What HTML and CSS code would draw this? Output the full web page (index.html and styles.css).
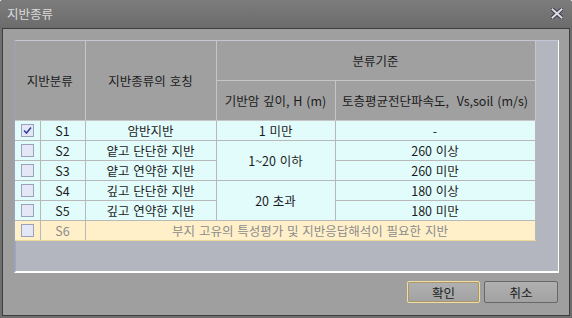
FILE: index.html
```html
<!DOCTYPE html>
<html><head><meta charset="UTF-8">
<title>지반종류</title>
<link rel="stylesheet" href="styles.css">
</head>
<body>
<div class="window">
  <div class="titlebar">
    <span class="title">지반종류</span>
    <svg class="close" width="12" height="11" viewBox="0 0 12 11">
      <path d="M1.5 1.5 L10.5 9.5 M10.5 1.5 L1.5 9.5" stroke="#3c3c4c" stroke-width="4" stroke-linecap="square"/>
      <path d="M1.5 1.5 L10.5 9.5 M10.5 1.5 L1.5 9.5" stroke="#dcdce4" stroke-width="2" stroke-linecap="square"/>
    </svg>
  </div>
  <div class="body">
    <div class="grid">
      <table class="sites">
        <colgroup>
          <col class="c-chk"><col class="c-code"><col class="c-name"><col class="c-depth"><col class="c-vs">
        </colgroup>
        <thead>
          <tr class="h1">
            <th colspan="2" rowspan="2">지반분류</th>
            <th rowspan="2">지반종류의 호칭</th>
            <th colspan="2">분류기준</th>
          </tr>
          <tr class="h2">
            <th>기반암 깊이, H (m)</th>
            <th>토층평균전단파속도,&nbsp; Vs,soil (m/s)</th>
          </tr>
        </thead>
        <tbody>
          <tr><td class="chk"><span class="box on"><svg width="11" height="11" viewBox="0 0 11 11"><path d="M2 5.5 L4.5 8 L9 2.5" fill="none" stroke="#34449a" stroke-width="1.6"/></svg></span></td><td>S1</td><td>암반지반</td><td>1 미만</td><td>-</td></tr>
          <tr><td class="chk"><span class="box"></span></td><td>S2</td><td>얕고 단단한 지반</td><td rowspan="2">1~20 이하</td><td>260 이상</td></tr>
          <tr><td class="chk"><span class="box"></span></td><td>S3</td><td>얕고 연약한 지반</td><td>260 미만</td></tr>
          <tr><td class="chk"><span class="box"></span></td><td>S4</td><td>깊고 단단한 지반</td><td rowspan="2">20 초과</td><td>180 이상</td></tr>
          <tr><td class="chk"><span class="box"></span></td><td>S5</td><td>깊고 연약한 지반</td><td>180 미만</td></tr>
          <tr class="special"><td class="chk"><span class="box"></span></td><td>S6</td><td colspan="3">부지 고유의 특성평가 및 지반응답해석이 필요한 지반</td></tr>
        </tbody>
      </table>
    </div>
    <div class="actions">
      <button class="btn focus">확인</button>
      <button class="btn">취소</button>
    </div>
  </div>
</div>
</body></html>
```
FILE: styles.css
```css
html, body {
  margin: 0;
  padding: 0;
}
body {
  font-family: "Noto Sans CJK KR", "Noto Sans", sans-serif;
  font-size: 12.5px;
  word-spacing: 1px;
  color: #1c1c1c;
}
.window {
  width: 572px;
  height: 318px;
  box-sizing: border-box;
  background: #6e6e6e;
  display: flex;
  flex-direction: column;
  border-radius: 3px 3px 0 0;
  overflow: hidden;
}
.titlebar {
  height: 28px;
  flex: none;
  box-sizing: border-box;
  padding: 0 9px 2px 7px;
  background: linear-gradient(#7c7c7c, #6c6c6c);
  display: flex;
  align-items: center;
  justify-content: space-between;
}
.title {
  color: #dcdcdc;
  font-size: 12.5px;
}
.body {
  flex: 1;
  margin: 0 2px 2px;
  border: 1px solid #3e3e3e;
  background: #9f9f9f;
  padding: 11px 10px 0 11px;
  display: flex;
  flex-direction: column;
}
.grid {
  height: 233px;
  box-sizing: border-box;
  border: 1px solid #c4c6d6;
  border-right-color: #ffffff;
  border-bottom: 2px solid #ffffff;
  border-left: 2px solid #9ea4bc;
  background: #b3b6bf;
}
.sites {
  border-collapse: collapse;
  table-layout: fixed;
  width: 520px;
  margin-left: -1px;
}
.c-chk { width: 25px; }
.c-code { width: 45px; }
.c-name { width: 131px; }
.c-depth { width: 119px; }
.c-vs { width: 200px; }
.sites th {
  background: #a0a0a0;
  border: 1px solid #c6c6c6;
  border-top: none;
  font-weight: normal;
  padding: 0;
  height: 39px;
  white-space: nowrap;
}
.sites th:first-child { border-left: none; }
.sites td {
  background: #e2fcfc;
  border: 1px solid #b8b8b8;
  text-align: center;
  height: 19px;
  padding: 0;
  line-height: 18px;
  white-space: nowrap;
}
.sites td:first-child { border-left: none; }
.sites .special td {
  background: #fff0c9;
  color: #8c8c8c;
  border-bottom-color: #f0d898;
}
.box {
  display: block;
  width: 11px;
  height: 11px;
  margin: 0 auto;
  border: 1px solid #9ca2bc;
  background: #e4e8f6;
}
.box svg {
  display: block;
}
.actions {
  display: flex;
  justify-content: flex-end;
  gap: 4px;
  margin-top: 8px;
  padding-right: 1px;
}
.btn {
  width: 74px;
  height: 22px;
  box-sizing: border-box;
  border: 1px solid #686868;
  border-radius: 2px;
  background: linear-gradient(#b0b0b0, #a2a2a2);
  font-family: inherit;
  font-size: 12.5px;
  color: #1c1c1c;
  padding: 0;
}
.btn.focus {
  width: 73px;
  border-color: #f4dc9c;
  box-shadow: inset 0 0 0 1px #a89870;
}
```
